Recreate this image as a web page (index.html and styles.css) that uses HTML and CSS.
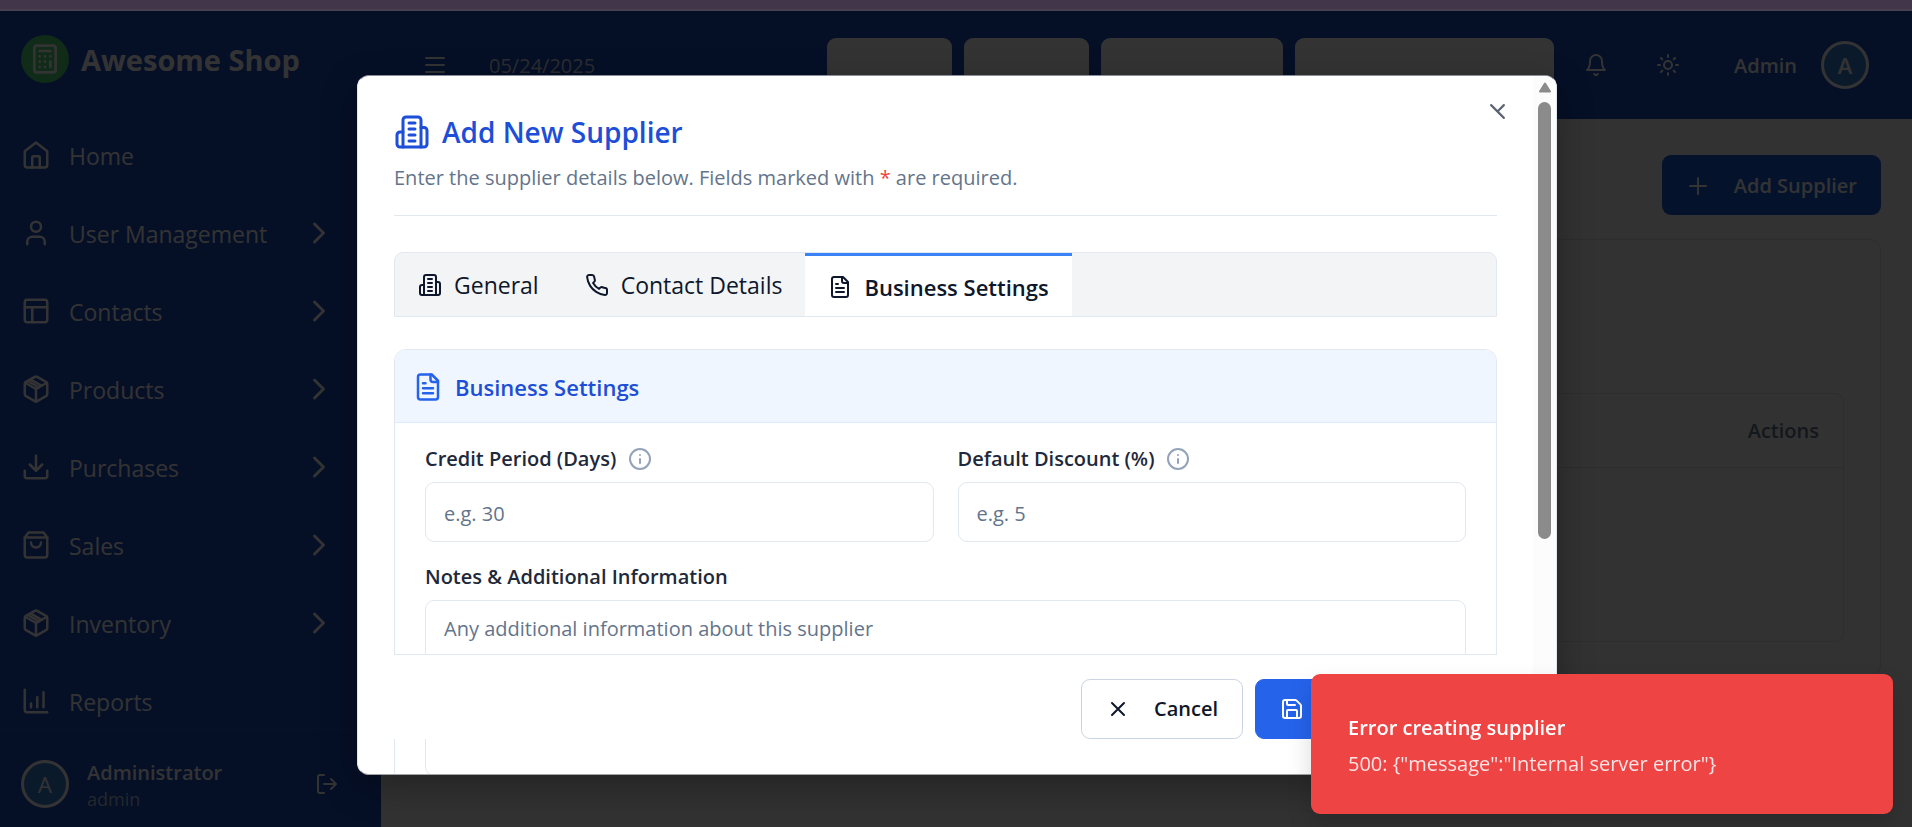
FILE: index.html
```html
<!DOCTYPE html>
<html lang="en">
<head>
<meta charset="utf-8">
<meta name="viewport" content="width=device-width, initial-scale=1">
<title>Awesome Shop - Suppliers</title>
<link rel="stylesheet" href="styles.css">
</head>
<body>
<svg class="defs" aria-hidden="true">
  <symbol id="chevron" viewBox="0 0 24 24"><path d="m9 18 6-6-6-6"/></symbol>
  <symbol id="package" viewBox="0 0 24 24"><path d="M11 21.73a2 2 0 0 0 2 0l7-4A2 2 0 0 0 21 16V8a2 2 0 0 0-1-1.73l-7-4a2 2 0 0 0-2 0l-7 4A2 2 0 0 0 3 8v8a2 2 0 0 0 1 1.73z"/><path d="M12 22V12"/><path d="m3.3 7 8.7 5 8.7-5"/><path d="m7.5 4.27 9 5.15"/><path d="m5.4 5.6 9 5.1"/></symbol>
  <symbol id="building" viewBox="0 0 24 24"><path d="M6 22V4a2 2 0 0 1 2-2h8a2 2 0 0 1 2 2v18Z"/><path d="M6 12H4a2 2 0 0 0-2 2v6a2 2 0 0 0 2 2h2"/><path d="M18 9h2a2 2 0 0 1 2 2v9a2 2 0 0 1-2 2h-2"/><path d="M10 6h4M10 10h4M10 14h4M10 18h4"/></symbol>
  <symbol id="file" viewBox="0 0 24 24"><path d="M15 2H6a2 2 0 0 0-2 2v16a2 2 0 0 0 2 2h12a2 2 0 0 0 2-2V7Z"/><path d="M14 2v4a2 2 0 0 0 2 2h4"/><path d="M10 9H8M16 13H8M16 17H8"/></symbol>
  <symbol id="info" viewBox="0 0 24 24"><circle cx="12" cy="12" r="10"/><path d="M12 16v-4M12 8h.01"/></symbol>
</svg>
<div class="window-strip"></div>
<div class="app">
  <aside class="sidebar">
    <div class="brand">
      <span class="brand-mark"><svg class="icon" viewBox="0 0 24 24"><rect x="4" y="2" width="16" height="20" rx="2"/><path d="M8 6h8M16 14v4M16 10h.01M12 10h.01M8 10h.01M12 14h.01M8 14h.01M12 18h.01M8 18h.01"/></svg></span>
      <span class="brand-name">Awesome Shop</span>
    </div>
    <nav class="nav">
      <a class="nav-item" href="#"><svg class="icon" viewBox="0 0 24 24"><path d="m3 9 9-7 9 7v11a2 2 0 0 1-2 2H5a2 2 0 0 1-2-2z"/><path d="M9 22v-8a1 1 0 0 1 1-1h4a1 1 0 0 1 1 1v8"/></svg><span>Home</span></a>
      <a class="nav-item" href="#"><svg class="icon" viewBox="0 0 24 24"><path d="M19 21v-2a4 4 0 0 0-4-4H9a4 4 0 0 0-4 4v2"/><circle cx="12" cy="7" r="4"/></svg><span>User Management</span><svg class="icon chevron"><use href="#chevron"/></svg></a>
      <a class="nav-item" href="#"><svg class="icon" viewBox="0 0 24 24"><rect x="3" y="3" width="18" height="18" rx="2"/><path d="M3 9h18M9 21V9"/></svg><span>Contacts</span><svg class="icon chevron"><use href="#chevron"/></svg></a>
      <a class="nav-item" href="#"><svg class="icon"><use href="#package"/></svg><span>Products</span><svg class="icon chevron"><use href="#chevron"/></svg></a>
      <a class="nav-item" href="#"><svg class="icon" viewBox="0 0 24 24"><path d="M21 15v4a2 2 0 0 1-2 2H5a2 2 0 0 1-2-2v-4"/><path d="m7 10 5 5 5-5M12 15V3"/></svg><span>Purchases</span><svg class="icon chevron"><use href="#chevron"/></svg></a>
      <a class="nav-item" href="#"><svg class="icon" viewBox="0 0 24 24"><path d="M6 2 3 6v14a2 2 0 0 0 2 2h14a2 2 0 0 0 2-2V6l-3-4Z"/><path d="M3 6h18M16 10a4 4 0 0 1-8 0"/></svg><span>Sales</span><svg class="icon chevron"><use href="#chevron"/></svg></a>
      <a class="nav-item" href="#"><svg class="icon"><use href="#package"/></svg><span>Inventory</span><svg class="icon chevron"><use href="#chevron"/></svg></a>
      <a class="nav-item" href="#"><svg class="icon" viewBox="0 0 24 24"><path d="M3 3v16a2 2 0 0 0 2 2h16"/><path d="M18 17V5M13 17V9M8 17v-3"/></svg><span>Reports</span></a>
    </nav>
    <div class="account">
      <span class="avatar">A</span>
      <div class="account-text"><span class="account-name">Administrator</span><span class="account-role">admin</span></div>
      <button class="icon-button" type="button" aria-label="Log out"><svg class="icon" viewBox="0 0 24 24"><path d="M9 21H5a2 2 0 0 1-2-2V5a2 2 0 0 1 2-2h4"/><path d="m16 17 5-5-5-5M21 12H9"/></svg></button>
    </div>
  </aside>

  <div class="workspace">
    <header class="topbar">
      <button class="icon-button" type="button" aria-label="Menu"><svg class="icon" viewBox="0 0 24 24"><path d="M3 5h18M3 12h18M3 19h18"/></svg></button>
      <span class="date">05/24/2025</span>
      <div class="shortcuts">
        <button class="shortcut w-1" type="button" aria-label="Shortcut 1"></button>
        <button class="shortcut w-1" type="button" aria-label="Shortcut 2"></button>
        <button class="shortcut w-2" type="button" aria-label="Shortcut 3"></button>
        <button class="shortcut w-3" type="button" aria-label="Shortcut 4"></button>
      </div>
      <div class="tools">
        <button class="icon-button" type="button" aria-label="Notifications"><svg class="icon" viewBox="0 0 24 24"><path d="M6 8a6 6 0 0 1 12 0c0 7 3 9 3 9H3s3-2 3-9"/><path d="M10.3 21a1.94 1.94 0 0 0 3.4 0"/></svg></button>
        <button class="icon-button" type="button" aria-label="Theme"><svg class="icon" viewBox="0 0 24 24"><circle cx="12" cy="12" r="4"/><path d="M12 2v2M12 20v2M4.93 4.93l1.41 1.41M17.66 17.66l1.41 1.41M2 12h2M20 12h2M6.34 17.66l-1.41 1.41M19.07 4.93l-1.41 1.41"/></svg></button>
      </div>
      <div class="user"><span class="user-name">Admin</span><span class="avatar">A</span></div>
    </header>
    <main class="main">
      <button class="add-button" type="button"><svg class="icon" viewBox="0 0 24 24"><path d="M4 12h16M12 4v16"/></svg><span>Add Supplier</span></button>
      <section class="panel">
        <div class="table-frame">
          <table class="table">
            <thead><tr><th>Actions</th></tr></thead>
            <tbody><tr><td></td></tr></tbody>
          </table>
        </div>
      </section>
    </main>
  </div>

  <div class="overlay">
    <div class="dialog" role="dialog" aria-labelledby="dialog-title">
      <div class="dialog-scroll">
        <header class="dialog-header">
          <h2 class="dialog-title" id="dialog-title"><svg class="icon"><use href="#building"/></svg>Add New Supplier</h2>
          <p class="dialog-text">Enter the supplier details below. Fields marked with <span class="required">*</span> are required.</p>
        </header>
        <div class="tabs" role="tablist">
          <button class="tab" type="button" role="tab"><svg class="icon"><use href="#building"/></svg>General</button>
          <button class="tab" type="button" role="tab"><svg class="icon" viewBox="0 0 24 24"><path d="M22 16.92v3a2 2 0 0 1-2.18 2 19.79 19.79 0 0 1-8.63-3.07 19.5 19.5 0 0 1-6-6 19.79 19.79 0 0 1-3.07-8.67A2 2 0 0 1 4.11 2h3a2 2 0 0 1 2 1.72 12.84 12.84 0 0 0 .7 2.81 2 2 0 0 1-.45 2.11L8.09 9.91a16 16 0 0 0 6 6l1.27-1.27a2 2 0 0 1 2.11-.45 12.84 12.84 0 0 0 2.81.7A2 2 0 0 1 22 16.92z"/></svg>Contact Details</button>
          <button class="tab active" type="button" role="tab" aria-selected="true"><svg class="icon"><use href="#file"/></svg>Business Settings</button>
        </div>
        <section class="card">
          <h3 class="card-title"><svg class="icon"><use href="#file"/></svg>Business Settings</h3>
          <div class="card-body">
            <div class="field">
              <div class="label-row"><label for="credit">Credit Period (Days)</label><svg class="icon"><use href="#info"/></svg></div>
              <input class="input" id="credit" type="text" placeholder="e.g. 30">
            </div>
            <div class="field">
              <div class="label-row"><label for="discount">Default Discount (%)</label><svg class="icon"><use href="#info"/></svg></div>
              <input class="input" id="discount" type="text" placeholder="e.g. 5">
            </div>
            <div class="field wide">
              <div class="label-row"><label for="notes">Notes &amp; Additional Information</label></div>
              <textarea class="input notes" id="notes" placeholder="Any additional information about this supplier"></textarea>
            </div>
          </div>
        </section>
        <footer class="dialog-footer">
          <button class="button" type="button"><svg class="icon" viewBox="0 0 24 24"><path d="M18 6 6 18M6 6l12 12"/></svg>Cancel</button>
          <button class="button primary" type="submit" aria-label="Save"><svg class="icon" viewBox="0 0 24 24"><path d="M15.2 3a2 2 0 0 1 1.4.6l3.8 3.8a2 2 0 0 1 .6 1.4V19a2 2 0 0 1-2 2H5a2 2 0 0 1-2-2V5a2 2 0 0 1 2-2z"/><path d="M17 21v-7a1 1 0 0 0-1-1H8a1 1 0 0 0-1 1v7M7 3v4a1 1 0 0 0 1 1h7"/></svg></button>
        </footer>
      </div>
      <div class="scrollbar" aria-hidden="true">
        <svg class="scroll-arrow" viewBox="0 0 14 12"><path d="M7 2 12 10H2Z"/></svg>
        <div class="scroll-thumb"></div>
      </div>
      <button class="close" type="button" aria-label="Close"><svg class="icon" viewBox="0 0 16 16"><path d="m2 2 12 12M14 2 8 8"/></svg></button>
    </div>
  </div>

  <div class="toast" role="alert">
    <strong class="toast-title">Error creating supplier</strong>
    <span class="toast-text">500: {"message":"Internal server error"}</span>
  </div>
</div>
</body>
</html>
```
FILE: styles.css
```css
* { box-sizing: border-box; }

body {
  margin: 0;
  height: 100vh;
  display: flex;
  flex-direction: column;
  overflow: hidden;
  font-family: "Open Sans", "Noto Sans", sans-serif;
  font-size: 20px;
  line-height: 30px;
  color: #0f172a;
}

button, input, textarea { font: inherit; color: inherit; }
button { cursor: pointer; }
h2, h3, p { margin: 0; }

.defs { position: absolute; width: 0; height: 0; }

.icon {
  flex: none;
  width: 24px;
  height: 24px;
  fill: none;
  stroke: currentColor;
  stroke-width: 2;
  stroke-linecap: round;
  stroke-linejoin: round;
}

.window-strip {
  flex: none;
  height: 11px;
  background: #41364a;
  border-bottom: 2px solid #4a3f50;
}

.app {
  position: relative;
  flex: 1;
  min-height: 0;
  display: flex;
}

/* Sidebar */
.sidebar {
  flex: none;
  width: 381px;
  display: flex;
  flex-direction: column;
  background: #194abf;
  color: #fff;
}

.brand {
  display: flex;
  align-items: center;
  gap: 12px;
  padding: 24px 21px;
}

.brand-mark {
  display: grid;
  place-items: center;
  width: 48px;
  height: 48px;
  border-radius: 50%;
  background: #4fd67b;
}
.brand-mark .icon { width: 32px; height: 32px; }

.brand-name {
  padding-top: 2px;
  font-size: 29px;
  font-weight: 700;
  line-height: 36px;
}

.nav {
  flex: 1;
  min-height: 0;
  overflow: hidden;
  padding-top: 9px;
}

.nav-item {
  display: flex;
  align-items: center;
  gap: 18px;
  height: 78px;
  padding: 0 44px 0 21px;
  color: inherit;
  font-size: 23px;
  text-decoration: none;
}
.nav-item span { padding-top: 2px; }
.nav-item .icon { width: 30px; height: 30px; }
.nav-item .chevron { width: 36px; height: 36px; margin-left: auto; stroke-width: 2; }

.account {
  display: flex;
  align-items: center;
  gap: 18px;
  height: 98px;
  padding: 10px 42px 0 21px;
  border-top: 1px solid #2a57c8;
}
.account-text { flex: 1; display: flex; flex-direction: column; padding-top: 2px; }
.account-name { font-weight: 600; line-height: 28px; }
.account-role { font-size: 18px; line-height: 24px; color: #b4c6dc; }

.avatar {
  flex: none;
  display: grid;
  place-items: center;
  width: 48px;
  height: 48px;
  border: 3px solid #fff;
  border-radius: 50%;
  background: #3a80d8;
  font-size: 22px;
}

.icon-button {
  display: grid;
  place-items: center;
  padding: 0;
  border: 0;
  background: none;
}

/* Workspace */
.workspace {
  flex: 1;
  min-width: 0;
  display: flex;
  flex-direction: column;
}

.topbar {
  flex: none;
  display: flex;
  align-items: center;
  height: 108px;
  padding: 0 43px 0 42px;
  background: #194abf;
  color: #fff;
}
.date { margin-left: 42px; padding-top: 2px; color: #d4dcec; }

.shortcuts { display: flex; gap: 12px; margin-left: auto; }
.shortcut { height: 54px; border: 0; border-radius: 9px; background: #fff; }
.w-1 { width: 125px; }
.w-2 { width: 182px; }
.w-3 { width: 259px; }

.tools { display: flex; gap: 48px; margin: 0 54px 0 30px; }
.user { display: flex; align-items: center; gap: 24px; font-weight: 600; }
.user-name { padding-top: 2px; }

.main {
  flex: 1;
  display: flex;
  flex-direction: column;
  align-items: flex-end;
  gap: 24px;
  padding: 36px 31px;
  background: #f8f8f8;
}

.add-button {
  display: flex;
  align-items: center;
  gap: 24px;
  height: 60px;
  padding: 2px 24px 0;
  border: 0;
  border-radius: 9px;
  background: #145adc;
  color: #fff;
  font-weight: 600;
}

.panel {
  align-self: stretch;
  height: 438px;
  padding: 153px 36px 36px;
  border: 1px solid #dedede;
  border-radius: 12px;
  background: #fbfbfb;
}

.table-frame {
  height: 249px;
  border: 1px solid #dedede;
  border-radius: 9px;
}
.table { width: 100%; border-collapse: collapse; }
.table th {
  height: 73px;
  padding: 2px 24px 0;
  border-bottom: 1px solid #dedede;
  color: #64748b;
  font-weight: 600;
  text-align: right;
}

/* Dialog */
.overlay {
  position: absolute;
  inset: 0;
  display: grid;
  place-items: center;
  padding: 12px 0 0 2px;
  background: rgba(0, 0, 0, 0.8);
}

.dialog {
  position: relative;
  display: flex;
  width: 100%;
  max-width: 1200px;
  height: 87%;
  border: 1px solid #e2e8f0;
  border-top-color: #8a8f99;
  border-bottom-color: #a3a3a3;
  border-radius: 12px;
  background: #fff;
  overflow: hidden;
  box-shadow: 0 12px 36px rgba(0, 0, 0, 0.3);
}

.dialog-scroll {
  flex: 1;
  min-width: 0;
  padding: 35px 36px;
  overflow: hidden;
}

.dialog-header {
  padding-bottom: 22px;
  border-bottom: 1px solid #e2e8f0;
}

.dialog-title {
  display: flex;
  align-items: center;
  gap: 12px;
  font-size: 28px;
  font-weight: 600;
  line-height: 42px;
  color: #1d4ed8;
}
.dialog-title .icon { width: 36px; height: 36px; }
.dialog-text { margin-top: 10px; color: #64748b; }
.required { color: #ef4444; }

.tabs {
  display: flex;
  height: 65px;
  margin-top: 36px;
  border: 1px solid #e2e8f0;
  border-radius: 9px 9px 0 0;
  background: #f3f4f6;
}

.tab {
  display: flex;
  align-items: center;
  gap: 12px;
  padding: 0 23px;
  border: 0;
  background: none;
  font-size: 23px;
}
.tab.active {
  padding-top: 2px;
  border-top: 3px solid #3b82f6;
  background: #fff;
  font-size: 22px;
  font-weight: 600;
}

.card {
  margin-top: 32px;
  border: 1px solid #e2e8f0;
  border-radius: 12px;
}

.card-title {
  display: flex;
  align-items: center;
  gap: 12px;
  height: 73px;
  padding: 2px 18px 0;
  border-bottom: 1px solid #dbeafe;
  border-radius: 11px 11px 0 0;
  background: #eff6ff;
  color: #1d4ed8;
  font-size: 22px;
  font-weight: 600;
}
.card-title .icon { width: 30px; height: 30px; color: #2563eb; }

.card-body {
  display: grid;
  grid-template-columns: 1fr 1fr;
  gap: 20px 24px;
  padding: 21px 30px 30px;
}
.wide { grid-column: 1 / -1; }

.label-row {
  display: flex;
  align-items: center;
  gap: 12px;
  margin-bottom: 8px;
  font-weight: 600;
  color: #1e293b;
}
.label-row .icon { color: #94a3b8; }

.input {
  display: block;
  width: 100%;
  height: 60px;
  padding: 13px 18px 11px;
  border: 1px solid #e2e8f0;
  border-radius: 9px;
  background: #fff;
  resize: none;
}
.input::placeholder { color: #64748b; opacity: 1; }
.notes { height: 176px; }

.dialog-footer {
  position: sticky;
  bottom: 0;
  display: flex;
  justify-content: flex-end;
  gap: 12px;
  margin-top: 36px;
  padding-top: 24px;
  border-top: 1px solid #e2e8f0;
  background: #fff;
}

.button {
  display: flex;
  align-items: center;
  gap: 24px;
  height: 60px;
  padding: 0 24px;
  border: 1px solid #cbd5e1;
  border-radius: 9px;
  background: #fff;
  font-weight: 600;
}
.primary {
  width: 242px;
  border-color: #2563eb;
  background: #2563eb;
  color: #fff;
}

.scrollbar {
  flex: none;
  display: flex;
  flex-direction: column;
  align-items: center;
  gap: 8px;
  width: 23px;
  padding-top: 5px;
  background: #fcfcfc;
}
.scroll-arrow {
  width: 14px;
  height: 13px;
  fill: #8b8b8b;
  stroke: #8b8b8b;
  stroke-width: 2;
  stroke-linejoin: round;
}
.scroll-thumb { width: 13px; height: 63%; border-radius: 7px; background: #8b8b8b; }

.close {
  position: absolute;
  top: 27px;
  right: 50px;
  display: grid;
  padding: 0;
  border: 0;
  background: none;
  color: #5b6472;
}
.close .icon { width: 17px; height: 17px; }

/* Toast */
.toast {
  position: absolute;
  right: 19px;
  bottom: 13px;
  display: flex;
  flex-direction: column;
  justify-content: center;
  gap: 6px;
  width: 582px;
  height: 140px;
  padding: 4px 37px 0;
  border-radius: 9px;
  background: #ef4444;
  color: #fff;
  box-shadow: 0 12px 24px rgba(0, 0, 0, 0.15);
}
.toast-title { font-weight: 600; }
.toast-text { color: #fde3e3; }
```
